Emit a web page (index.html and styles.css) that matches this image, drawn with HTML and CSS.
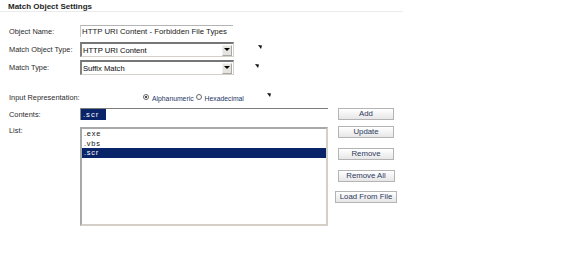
FILE: index.html
```html
<!DOCTYPE html>
<html>
<head>
<meta charset="utf-8">
<link rel="stylesheet" href="styles.css">
</head>
<body>
<div class="page">
  <div class="title">Match Object Settings</div>
  <div class="form">
    <div class="row row-name">
      <div class="label">Object Name:</div>
      <div class="textbox">HTTP URI Content - Forbidden File Types</div>
    </div>
    <div class="row row-type">
      <div class="label">Match Object Type:</div>
      <div class="select"><span class="select-text">HTTP URI Content</span><span class="select-btn"><svg width="6" height="4" viewBox="0 0 6 4"><polygon points="0,0 6,0 3,3" fill="#000"/></svg></span></div>
      <svg class="marker m1" width="4" height="4" viewBox="0 0 4 4"><polygon points="0,0 4,0.5 3,4" fill="#111"/></svg>
    </div>
    <div class="row row-match">
      <div class="label">Match Type:</div>
      <div class="select"><span class="select-text">Suffix Match</span><span class="select-btn"><svg width="6" height="4" viewBox="0 0 6 4"><polygon points="0,0 6,0 3,3" fill="#000"/></svg></span></div>
      <svg class="marker m2" width="4" height="4" viewBox="0 0 4 4"><polygon points="0,0 4,0.5 3,4" fill="#111"/></svg>
    </div>
    <div class="row row-rep">
      <div class="label">Input Representation:</div>
      <div class="radios">
        <span class="radio checked"></span><span class="radio-label">Alphanumeric</span>
        <span class="radio"></span><span class="radio-label">Hexadecimal</span>
      </div>
      <svg class="marker m3" width="4" height="4" viewBox="0 0 4 4"><polygon points="0,0 4,0.5 3,4" fill="#111"/></svg>
    </div>
    <div class="lower">
      <div class="lower-left">
        <div class="row row-contents">
          <div class="label">Contents:</div>
          <div class="contents-input"><span class="sel-text">.scr</span></div>
        </div>
        <div class="row row-list">
          <div class="label">List:</div>
          <div class="listbox">
            <div class="item">.exe</div>
            <div class="item">.vbs</div>
            <div class="item selected">.scr</div>
          </div>
        </div>
      </div>
      <div class="buttons">
        <div class="btn b-add">Add</div>
        <div class="btn b-update">Update</div>
        <div class="btn b-remove">Remove</div>
        <div class="btn b-removeall">Remove All</div>
        <div class="btn b-load">Load From File</div>
      </div>
    </div>
  </div>
</div>
</body>
</html>
```
FILE: styles.css
```css
html, body {
  margin: 0;
  padding: 0;
  background: #ffffff;
}
body {
  font-family: "Liberation Sans", Arial, sans-serif;
  color: #2b2b2b;
  font-size: 7.4px;
}
.page {
  width: 576px;
  height: 256px;
}
.title {
  width: 403px;
  box-sizing: border-box;
  padding: 2px 0 0 8px;
  height: 12px;
  line-height: 9px;
  font-weight: bold;
  font-size: 8px;
  color: #1e1e1e;
  border-bottom: 1px solid #ebebeb;
}
.form {
  padding-left: 9px;
}
.row {
  display: flex;
  align-items: center;
}
.label {
  width: 71px;
  flex: none;
  white-space: nowrap;
}
.row-name {
  margin-top: 13px;
  height: 12px;
}
.textbox {
  width: 153px;
  height: 12px;
  box-sizing: border-box;
  border-top: 1px solid #b4b4b4;
  border-left: 1px solid #c8c8c8;
  font-size: 7.8px;
  line-height: 11px;
  color: #222;
  padding-left: 1px;
  white-space: nowrap;
  overflow: hidden;
}
.row-type {
  margin-top: 5px;
  height: 15px;
}
.row-match {
  margin-top: 3px;
  height: 15px;
}
.select {
  width: 154px;
  height: 15px;
  box-sizing: border-box;
  border-top: 2px solid #767676;
  border-left: 2px solid #808080;
  border-right: 1px solid #d4d0c8;
  border-bottom: 1px solid #d4d0c8;
  display: flex;
  align-items: center;
  justify-content: space-between;
}
.select-text {
  padding-left: 1px;
  font-size: 7.6px;
  color: #111;
  -webkit-text-stroke: 0.05px #111;
}
.select-btn {
  width: 10px;
  height: 11px;
  box-sizing: border-box;
  margin-right: 1px;
  background: #e6e4de;
  border: 1px solid #a8a8a8;
  border-top-color: #f4f4f4;
  border-left-color: #f0f0f0;
  display: flex;
  align-items: center;
  justify-content: center;
}
.marker {
  display: block;
  flex: none;
}
.m1 { margin-left: 24px; margin-top: -6px; }
.m2 { margin-left: 21px; margin-top: -4px; }
.m3 { margin-left: 21px; margin-top: -4px; }
.row-rep {
  margin-top: 16px;
  height: 12px;
}
.radios {
  display: flex;
  align-items: center;
  margin-left: 63px;
  margin-top: -1px;
}
.radio {
  width: 6px;
  height: 6px;
  box-sizing: border-box;
  border: 1px solid #6a6a6a;
  border-radius: 50%;
  background: #fff;
  position: relative;
}
.radio.checked::after {
  content: "";
  position: absolute;
  left: 1px;
  top: 1px;
  width: 2px;
  height: 2px;
  border-radius: 50%;
  background: #111;
}
.radio-label {
  font-size: 6.8px;
  color: #1d3566;
  margin: 3px 2px 0 3px;
}
.lower {
  margin-top: 5px;
  display: flex;
  align-items: flex-start;
}
.lower-left {
  width: 319px;
}
.row-contents {
  height: 12px;
}
.contents-input {
  width: 248px;
  height: 12px;
  box-sizing: border-box;
  border-top: 1px solid #7d7d7d;
  border-left: 1px solid #8a8a8a;
  display: flex;
  align-items: stretch;
}
.sel-text {
  background: #0a246a;
  color: #ffffff;
  width: 25px;
  box-sizing: border-box;
  padding-left: 2px;
  line-height: 11px;
  font-size: 7.6px;
  letter-spacing: 1px;
}
.row-list {
  margin-top: 7px;
  align-items: flex-start;
}
.row-list .label {
  margin-top: -1px;
}
.listbox {
  width: 249px;
  height: 99px;
  box-sizing: border-box;
  border-top: 2px solid #a8a8a8;
  border-left: 2px solid #a8a8a8;
  border-right: 2px solid #d4d0c8;
  border-bottom: 2px solid #d4d0c8;
}
.item {
  height: 9.5px;
  line-height: 10px;
  padding-left: 2px;
  font-size: 7.4px;
  letter-spacing: 0.8px;
  color: #111;
}
.item.selected {
  background: #0a246a;
  color: #fff;
}
.buttons {
  margin-left: 6px;
  width: 64px;
  display: flex;
  flex-direction: column;
  align-items: center;
}
.btn {
  min-width: 56px;
  height: 12px;
  box-sizing: border-box;
  padding: 0 4px;
  border: 1px solid #b4b4b4;
  background: linear-gradient(#ffffff, #e6e6e6);
  color: #2c3a5e;
  font-size: 7.8px;
  line-height: 10px;
  text-align: center;
  white-space: nowrap;
}
.b-update { margin-top: 6px; }
.b-remove { margin-top: 10px; }
.b-removeall { margin-top: 10px; min-width: 57px; }
.b-load { margin-top: 9px; }
```
